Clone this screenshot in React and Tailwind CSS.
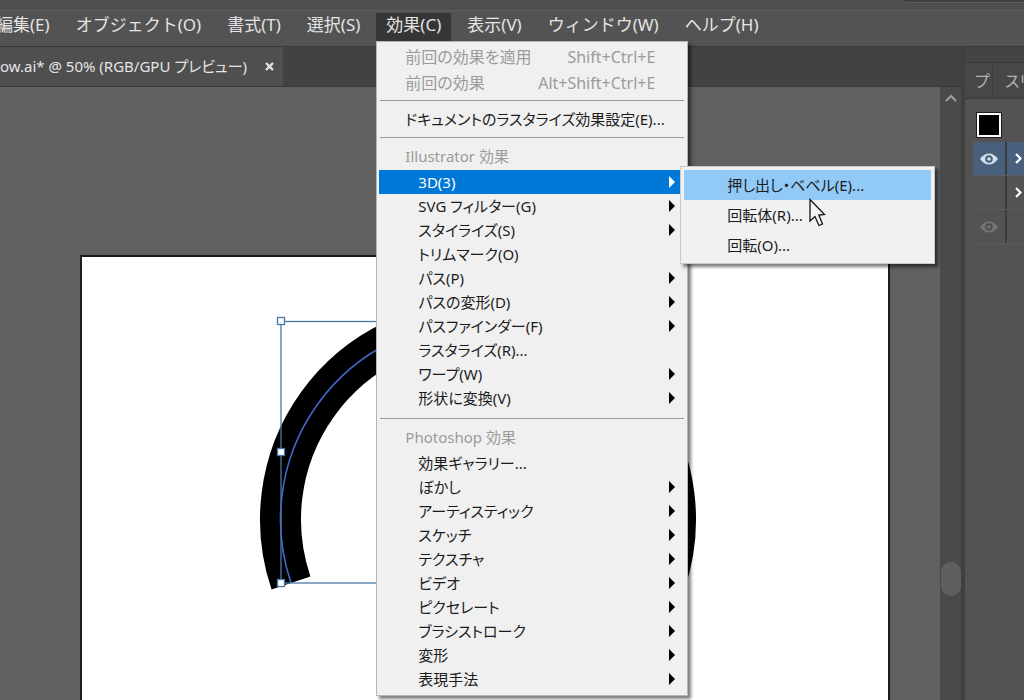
import { useState } from 'react';
import clsx from 'clsx';

const menus = [
  '編集(E)',
  'オブジェクト(O)',
  '書式(T)',
  '選択(S)',
  '効果(C)',
  '表示(V)',
  'ウィンドウ(W)',
  'ヘルプ(H)',
];

const illustratorEffects = [
  { label: '3D(3)', sub: ['押し出し・ベベル(E)...', '回転体(R)...', '回転(O)...'] },
  { label: 'SVG フィルター(G)', sub: [] },
  { label: 'スタイライズ(S)', sub: [] },
  { label: 'トリムマーク(O)' },
  { label: 'パス(P)', sub: [] },
  { label: 'パスの変形(D)', sub: [] },
  { label: 'パスファインダー(F)', sub: [] },
  { label: 'ラスタライズ(R)...' },
  { label: 'ワープ(W)', sub: [] },
  { label: '形状に変換(V)', sub: [] },
];

const photoshopEffects = [
  { label: '効果ギャラリー...' },
  { label: 'ぼかし', sub: [] },
  { label: 'アーティスティック', sub: [] },
  { label: 'スケッチ', sub: [] },
  { label: 'テクスチャ', sub: [] },
  { label: 'ビデオ', sub: [] },
  { label: 'ピクセレート', sub: [] },
  { label: 'ブラシストローク', sub: [] },
  { label: '変形', sub: [] },
  { label: '表現手法', sub: [] },
];

function Separator() {
  return <div className="ml-px -mr-1 my-1 border-t border-[#9a9a9a]" />;
}

function Heading({ children }) {
  return <div className="h-7 pl-[26px] leading-7 text-[#9b9b9b]">{children}</div>;
}

function DisabledItem({ label, shortcut }) {
  return (
    <button
      disabled
      className="h-[26px] w-full flex items-center justify-between pl-[26px] pr-[25px] text-base text-[#9b9b9b]"
    >
      <span>{label}</span>
      <span>{shortcut}</span>
    </button>
  );
}

function Cursor() {
  return (
    <svg className="absolute left-[128px] top-[31px] w-[17px] h-[29px]" viewBox="0 0 17 29">
      <path
        d="M1 1.5 V23 L6 18.5 L10 27.5 L13.5 26 L9.8 17 L15.5 16.5 Z"
        fill="#f4f4f4"
        stroke="#151515"
        strokeWidth="1.3"
      />
    </svg>
  );
}

function SubMenu({ items }) {
  return (
    <div className="absolute left-full -top-1 w-[255px] p-[3px] bg-[#f1f1f1] border border-[#c9c9c9] shadow-[3px_3px_3px_rgba(0,0,0,0.5)] text-[#1c1c1c]">
      {items.map((label, i) => (
        <button
          key={label}
          className={clsx(
            'block w-full h-[30px] pl-[43px] text-left leading-[30px]',
            i === 0 && 'bg-[#91c9f7]'
          )}
        >
          {label}
        </button>
      ))}
      <Cursor />
    </div>
  );
}

function EffectItem({ item, open, onOpen }) {
  return (
    <div className="relative">
      <button
        onMouseEnter={onOpen}
        className={clsx(
          'w-full h-6 pl-[39px] pr-[5px] flex items-center justify-between',
          open ? 'bg-[#0078d7] text-white' : 'text-[#1c1c1c]'
        )}
      >
        <span>{item.label}</span>
        {item.sub && (
          <svg
            className={clsx('w-[6px] h-[12px]', open ? 'text-white' : 'text-black')}
            viewBox="0 0 6 12"
            fill="currentColor"
          >
            <path d="M0 0 L6 6 L0 12 Z" />
          </svg>
        )}
      </button>
      {open && item.sub && item.sub.length > 0 && <SubMenu items={item.sub} />}
    </div>
  );
}

function EffectMenu() {
  const [open, setOpen] = useState('3D(3)');

  const renderItems = (items) =>
    items.map((item) => (
      <EffectItem
        key={item.label}
        item={item}
        open={open === item.label}
        onOpen={() => setOpen(item.label)}
      />
    ));

  return (
    <div className="absolute left-0 top-full w-[312px] pl-[2px] pr-[7px] pt-[2px] pb-1 bg-[#f0f0f0] border border-[#b5b5b5] shadow-[3px_3px_3px_rgba(0,0,0,0.5)] text-[15px] whitespace-nowrap [font-feature-settings:'palt']">
      <DisabledItem label="前回の効果を適用" shortcut="Shift+Ctrl+E" />
      <DisabledItem label="前回の効果" shortcut="Alt+Shift+Ctrl+E" />
      <Separator />
      <button className="block w-full h-7 pl-[26px] text-left leading-7 text-[#1c1c1c]">
        ドキュメントのラスタライズ効果設定(E)...
      </button>
      <Separator />
      <Heading>Illustrator 効果</Heading>
      {renderItems(illustratorEffects)}
      <div className="h-1" />
      <Separator />
      <Heading>Photoshop 効果</Heading>
      {renderItems(photoshopEffects)}
    </div>
  );
}

function MenuBar() {
  return (
    <nav className="relative z-20 h-9 -ml-[14px] flex gap-[6px] border-t border-[#5e5e5e] bg-[#535353] text-[17px] text-[#e4e4e4]">
      {menus.map((name) => {
        const active = name === '効果(C)';
        return (
          <div key={name} className="relative h-[30px] pt-[2px]">
            <button
              className={clsx(
                'block h-[28px] px-[10px] whitespace-nowrap leading-[24px] pb-1',
                active && 'bg-[#363636]'
              )}
            >
              {name}
            </button>
            {active && <EffectMenu />}
          </div>
        );
      })}
    </nav>
  );
}

// Selected arc with its centre line and bounding box
function Artwork() {
  const handles = [
    [23, 6],
    [23, 137],
    [23, 268],
  ];
  return (
    <svg className="block ml-[176px] mt-[58px] w-[442px] h-[280px]" viewBox="0 0 442 280" fill="none">
      <path d="M33 268 A197.5 197.5 0 1 1 407 268" stroke="#000" strokeWidth="41" />
      <path d="M33 268 A197.5 197.5 0 1 1 407 268" stroke="#3f68c8" strokeWidth="1.6" />
      <rect x="23" y="6.5" width="394" height="261.5" stroke="#4878a8" strokeWidth="1.3" />
      {handles.map(([x, y]) => (
        <rect
          key={y}
          x={x - 3.5}
          y={y - 3.5}
          width="7"
          height="7"
          fill="#fff"
          stroke="#4878a8"
          strokeWidth="1.3"
        />
      ))}
    </svg>
  );
}

function DocumentArea() {
  return (
    <main className="flex-1 min-w-0 flex flex-col">
      <div className="h-[41px] flex border-t border-b border-[#3a3a3a] bg-[#424242]">
        <div className="flex items-center gap-4 pr-2 bg-[#4f4f4f] text-[#e4e4e4]">
          <button className="text-[15px] whitespace-nowrap [font-feature-settings:'palt']">
            ow.ai* @ 50% (RGB/GPU プレビュー)
          </button>
          <button aria-label="閉じる" className="w-3 h-3 flex items-center justify-center">
            <svg className="w-[9px] h-[9px]" viewBox="0 0 9 9" stroke="currentColor" strokeWidth="2.4">
              <path d="M1 1 L8 8 M8 1 L1 8" />
            </svg>
          </button>
        </div>
      </div>
      <div className="flex-1 min-h-0 flex">
        <div className="flex-1 min-w-0 flex overflow-hidden pt-[168px] pl-20 pr-[50px] bg-[#606060]">
          <div className="flex-1 min-w-0 overflow-hidden border-2 border-b-0 border-[#1c1c1c] bg-white">
            <Artwork />
          </div>
        </div>
        <div className="w-[21px] flex flex-col items-center bg-[#4a4a4a]">
          <svg
            className="mt-[7px] w-3 h-2 text-[#a0a0a0]"
            viewBox="0 0 12 8"
            fill="none"
            stroke="currentColor"
            strokeWidth="2"
          >
            <path d="M1 7 L6 2 L11 7" />
          </svg>
          <div className="mt-auto mb-[104px] w-5 h-[34px] rounded-full bg-[#5f5f5f]" />
        </div>
      </div>
    </main>
  );
}

function Eye({ dim }) {
  return (
    <svg
      className={clsx('w-[18px] h-3', dim ? 'text-[#747474]' : 'text-[#d3dfec]')}
      viewBox="0 0 18 12"
    >
      <path d="M0 6 Q4 0.5 9 0.5 Q14 0.5 18 6 Q14 11.5 9 11.5 Q4 11.5 0 6 Z" fill="currentColor" />
      <circle cx="9" cy="6" r="3.8" fill={dim ? '#505050' : '#49607c'} />
      <circle cx="9" cy="6" r="1.8" fill="currentColor" />
    </svg>
  );
}

const layers = [
  { id: 1, eye: 'on', arrow: true, selected: true },
  { id: 2, arrow: true },
  { id: 3, eye: 'dim' },
];

function SidePanel() {
  return (
    <aside className="w-[63px] shrink-0 overflow-hidden border-l-4 border-[#404040] bg-[#535353]">
      <div className="h-[17px] border-t border-b border-[#383838] bg-[#444444]" />
      <div className="h-9 flex border-b border-[#3a3a3a] bg-[#474747] text-base text-[#b4b4b4]">
        <button className="w-7 shrink-0 pl-[10px] text-left border-r border-[#3c3c3c] [font-feature-settings:'palt']">
          プ
        </button>
        <button className="shrink-0 pl-3 text-left [font-feature-settings:'palt']">スリ</button>
      </div>
      <div className="pl-2 pt-[9px]">
        <div className="h-[34px] pt-1 pl-[3px]">
          <div className="w-[26px] h-[26px] border border-[#1c1c1c] bg-white p-[2px]">
            <div className="w-full h-full bg-black" />
          </div>
        </div>
        {layers.map((layer) => (
          <div
            key={layer.id}
            className={clsx(
              'h-[34px] flex border-b border-[#5c5c5c]',
              layer.selected && 'bg-[#49607c]'
            )}
          >
            <div className="w-[34px] shrink-0 flex items-center justify-center border-r-2 border-[#3c3c3c]">
              {layer.eye && (
                <button aria-label="表示">
                  <Eye dim={layer.eye === 'dim'} />
                </button>
              )}
            </div>
            {layer.arrow && (
              <button aria-label="展開" className="shrink-0 pl-2">
                <svg
                  className="w-[7px] h-[11px] text-white"
                  viewBox="0 0 7 11"
                  fill="none"
                  stroke="currentColor"
                  strokeWidth="2.2"
                >
                  <path d="M1 1 L5.5 5.5 L1 10" />
                </svg>
              </button>
            )}
          </div>
        ))}
      </div>
    </aside>
  );
}

export default function App() {
  return (
    <div className="h-screen w-full overflow-hidden flex flex-col bg-[#535353] font-['Noto_Sans','Noto_Sans_CJK_JP',sans-serif]">
      <div className="h-[10px] shrink-0 flex justify-end bg-[#4f4f4f]">
        <div className="w-[119px] h-[3px] border-b border-[#5e5e5e] bg-[#404040]" />
      </div>
      <MenuBar />
      <div className="flex-1 min-h-0 flex">
        <DocumentArea />
        <SidePanel />
      </div>
    </div>
  );
}
